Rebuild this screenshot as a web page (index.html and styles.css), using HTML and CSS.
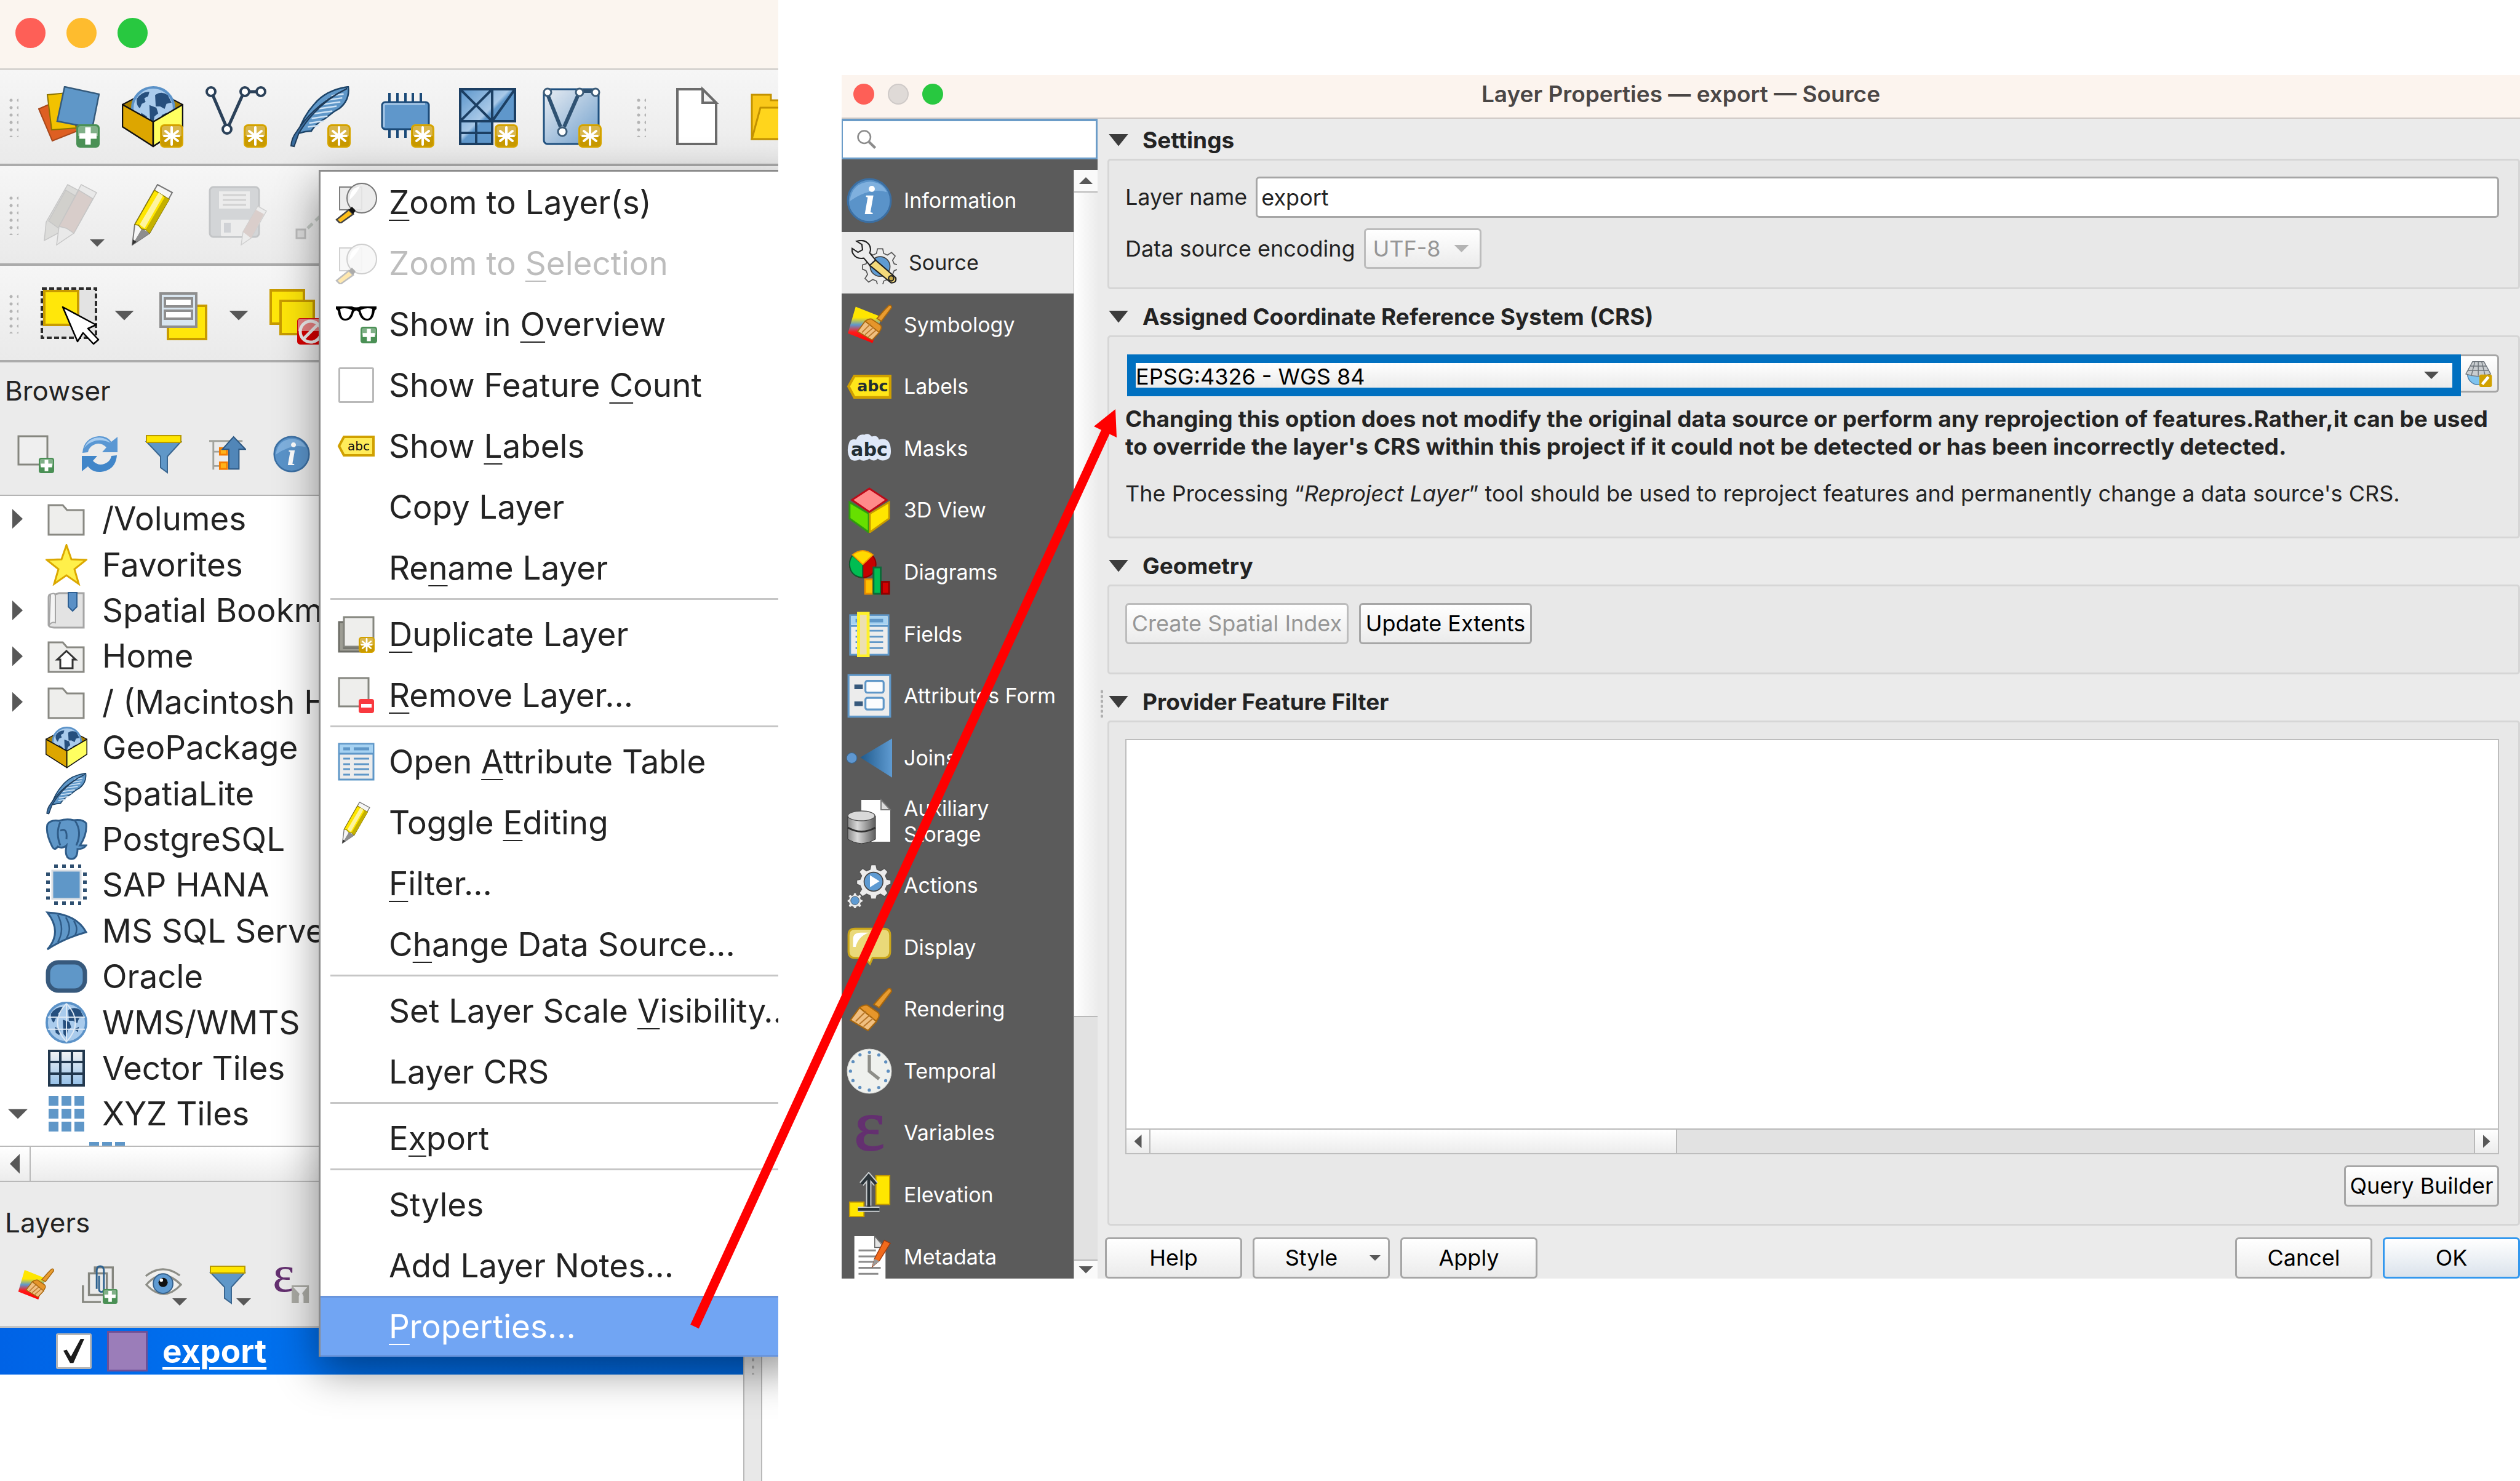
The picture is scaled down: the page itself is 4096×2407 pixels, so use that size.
FILE: index.html
```html
<!DOCTYPE html>
<html lang="en">
<head>
<meta charset="utf-8">
<title>Layer Properties</title>
<link rel="stylesheet" href="styles.css">
</head>
<body>
<svg class="paints" aria-hidden="true">
  <defs>
    <linearGradient id="gGrid" x1="0" y1="0" x2="1" y2="1"><stop offset="0" stop-color="#e9edf3"/><stop offset="1" stop-color="#6f9fcc"/></linearGradient>
    <linearGradient id="gBlue" x1="0" y1="0" x2="1" y2="1"><stop offset="0" stop-color="#5a95cb"/><stop offset=".45" stop-color="#a9c9e8"/><stop offset=".5" stop-color="#5f97cb"/><stop offset="1" stop-color="#5f97cb"/></linearGradient>
    <linearGradient id="gJoin" x1="0" y1="0" x2="1" y2="0"><stop offset="0" stop-color="#205a8c"/><stop offset="1" stop-color="#5f9bd2"/></linearGradient>
    <linearGradient id="gCyl" x1="0" y1="0" x2="1" y2="0"><stop offset="0" stop-color="#8b8b8b"/><stop offset=".35" stop-color="#d8d8d8"/><stop offset="1" stop-color="#5c5c5c"/></linearGradient>
    <linearGradient id="gVt" x1="0" y1="0" x2="0" y2="1"><stop offset="0" stop-color="#f4f4f4"/><stop offset="1" stop-color="#94c0e8"/></linearGradient>
    <linearGradient id="gSwatch" x1="0" y1="0" x2="0" y2="1"><stop offset="0" stop-color="#ffe600"/><stop offset=".3" stop-color="#ffe600"/><stop offset=".5" stop-color="#5f97cb"/><stop offset=".7" stop-color="#ff1a1a"/><stop offset="1" stop-color="#ff0000"/></linearGradient>
  </defs>
</svg>
<svg class="symbols" aria-hidden="true">
  <symbol id="b-new" viewBox="0 0 38 38"><rect x="1" y="1" width="36" height="36" rx="6" fill="#c99a00" stroke="#d9a700" stroke-width="2"/><path d="M3 7q0-4 4-4h24q4 0 4 4v12H3z" fill="#d9b64a"/><path d="M19 5v28M9 11l20 16M29 11L9 27M7 19h24" stroke="#fff" stroke-width="4" stroke-linecap="round"/></symbol>
  <symbol id="b-plus" viewBox="0 0 38 38"><rect width="38" height="38" rx="6" fill="#4a9055"/><path d="M3 7q0-4 4-4h24q4 0 4 4v12H3z" fill="#80b088"/><path d="M19 5v28M5 19h28" stroke="#fff" stroke-width="9"/></symbol>
  <symbol id="i-globe" viewBox="0 0 70 70"><circle cx="35" cy="35" r="33" fill="#a9cbec" stroke="#5b92c8" stroke-width="4"/><path d="M9 20q8-12 20-11l-2 7-6 3 2 6-6 3-3 7q-6-4-5-15zM38 14q10-7 20 0l6 12-8 2-3 8-7-4-7 0zM29 30l11 4 3 9-6 5-2 12-5-6zM16 42l9 6-2 8-6-4zM48 46l8-4-2 9z" fill="#264f7d"/></symbol>
  <symbol id="i-source-manager" viewBox="0 0 100 100"><path d="M1 37L40 20 66 72 23 89z" fill="#de5f22" stroke="#a8481c" stroke-width="2"/><path d="M15 14L46 11 62 68 22 71z" fill="#f2c200" stroke="#8d7300" stroke-width="2"/><path d="M43 1L99 13 88 68 31 57z" fill="#5f97c8" stroke="#355a7b" stroke-width="2.500"/><use href="#b-plus" x="62" y="62" width="38" height="38"/></symbol>
  <symbol id="i-gpkg" viewBox="0 0 100 100"><path d="M1 30L22 19H78L99 30 51 58z" fill="#a97f00" stroke="#111" stroke-width="2"/><use href="#i-globe" x="15" y="0" width="72" height="72"/><path d="M1 30L51 58V98L1 66z" fill="#dda600" stroke="#111" stroke-width="2.500" stroke-linejoin="round"/><path d="M51 58L99 30V66L51 98z" fill="#ffff60" stroke="#111" stroke-width="2.500" stroke-linejoin="round"/></symbol>
  <symbol id="i-gpkg-new" viewBox="0 0 100 100"><use href="#i-gpkg" width="100" height="100"/><use href="#b-new" x="62" y="62" width="38" height="38"/></symbol>
  <symbol id="i-vector-new" viewBox="0 0 100 100"><g stroke="#2b4159" stroke-width="5" fill="#fff"><path d="M12 15L33 64M60 15L38 64M71 9h12" fill="none"/><circle cx="9" cy="9" r="7" stroke-width="4"/><circle cx="64" cy="9" r="7" stroke-width="4"/><circle cx="90" cy="9" r="7" stroke-width="4"/><circle cx="35" cy="70" r="7" stroke-width="4"/></g><use href="#b-new" x="62" y="62" width="38" height="38"/></symbol>
  <symbol id="i-feather" viewBox="0 0 100 100"><path d="M96 1Q60 6 41 29 22 50 14 77L26 74 36 73Q44 60 58 53L72 42 82 36Q99 22 96 1z" fill="#5f97c8" stroke="#1d4468" stroke-width="2.500"/><path d="M27 62h18M30 56h24M35 49h26M40 42h30M48 35h30M55 29h30M63 23h26M72 17h20" stroke="#cfe3f5" stroke-width="2.500" transform="rotate(-8 60 40)"/><path d="M94 4Q45 28 16 76L8 98 3 97Q4 84 12 74 40 30 94 4z" fill="#3a6d9f" stroke="#1d3a58" stroke-width="2"/></symbol>
  <symbol id="i-feather-new" viewBox="0 0 100 100"><use href="#i-feather" width="100" height="100"/><use href="#b-new" x="62" y="62" width="38" height="38"/></symbol>
  <symbol id="i-chip-new" viewBox="0 0 100 100"><path d="M27 11v15M40 11v15M53 11v15M65 11v15M78 11v15M27 70v14M40 70v14M53 70v14" stroke="#1b4a78" stroke-width="4"/><rect x="15" y="26" width="76" height="44" rx="5" fill="#5f97cb" stroke="#1b4a78" stroke-width="3"/><path d="M18 66V32q0-3 3-3h64" fill="none" stroke="#a9c9e8" stroke-width="3"/><use href="#b-new" x="62" y="62" width="38" height="38"/></symbol>
  <symbol id="i-mesh-new" viewBox="0 0 100 100"><path d="M6 5H95V57H58V94H6z" fill="url(#gBlue)"/><path d="M6 5H95V57H58V94H6zM6 57H58V5M6 5L58 57M58 5L6 57M95 5L58 57M32 57V94M6 76H58" fill="none" stroke="#1c3f63" stroke-width="4"/><use href="#b-new" x="62" y="62" width="38" height="38"/></symbol>
  <symbol id="i-vgrid-new" viewBox="0 0 100 100"><rect x="6" y="5" width="89" height="89" rx="6" fill="url(#gGrid)" stroke="#1f507f" stroke-width="3"/><path d="M13 16L33 66M61 16L39 66M70 8h14" stroke="#2f5273" stroke-width="6"/><g fill="#fff" stroke="#3c5c79" stroke-width="3"><circle cx="12" cy="10" r="6"/><circle cx="64" cy="10" r="6"/><circle cx="90" cy="10" r="6"/><circle cx="36" cy="74" r="7"/></g><use href="#b-new" x="62" y="62" width="38" height="38"/></symbol>
  <symbol id="i-file" viewBox="0 0 100 100"><path d="M19 5H60L82 27V94H19z" fill="#fff" stroke="#6b6b6b" stroke-width="4"/><path d="M60 5V27H82z" fill="#f2f2f2" stroke="#6b6b6b" stroke-width="4"/></symbol>
  <symbol id="i-folder-yellow" viewBox="0 0 100 100"><path d="M4 86V14H35V23H98V86z" fill="#fac81a" stroke="#c39200" stroke-width="3"/><path d="M4 86L18 35H100V86z" fill="#ffd51c" stroke="#c39200" stroke-width="3"/></symbol>
  <symbol id="i-pencil" viewBox="0 0 100 100"><path d="M17 99L21 66 58 1 82 14 45 80z" fill="#f6f6f6" stroke="#777" stroke-width="2"/><path d="M17 99L33 72 45 80z" fill="#8d8d8d"/><path d="M17 99L18 90 24 94z" fill="#333"/><path d="M21 66L53 10 77 25 45 80 39 74 32 73 27 67z" fill="#ffe600" stroke="#8a7a00" stroke-width="1.500"/><path d="M29 66L60 14 67 19 37 72z" fill="#fdf4a0"/><path d="M39 74L70 21 77 25 45 80z" fill="#c4b000"/></symbol>
  <symbol id="i-pencils-grey" viewBox="0 0 100 100"><g stroke="#c6c6c6" stroke-width="1.500"><path d="M10 92L13 62 48 1 72 14 36 78z" fill="#dcdcda"/><path d="M17 60L45 10 65 22 36 74z" fill="#d1d0cc"/><path d="M30 99L34 69 70 1 95 14 58 80z" fill="#e9e9e9"/><path d="M34 69L66 10 89 24 58 80 46 72z" fill="#d8cdca"/></g></symbol>
  <symbol id="i-save-grey" viewBox="0 0 100 100"><rect x="7" y="5" width="80" height="81" rx="6" fill="#d3d5d7" stroke="#c3c5c7" stroke-width="3"/><rect x="22" y="12" width="50" height="28" fill="#ececec"/><path d="M28 18h38M28 26h38M28 34h38" stroke="#d2d2d2" stroke-width="3"/><rect x="25" y="58" width="46" height="27" rx="2" fill="#ececec"/><rect x="30" y="63" width="11" height="16" fill="#d0d2d6"/><path d="M58 99L61 78 85 36 99 44 74 88z" fill="#ececec" stroke="#cfcfcf" stroke-width="1.500"/><path d="M61 78L82 42 95 49 74 88z" fill="#dacecb"/></symbol>
  <symbol id="i-nodes-grey" viewBox="0 0 100 100"><path d="M30 72L90 14" stroke="#c4cac5" stroke-width="5" stroke-dasharray="11 7"/><rect x="12" y="74" width="14" height="14" fill="#ddd" stroke="#bdbdbd" stroke-width="3"/></symbol>
  <symbol id="i-select" viewBox="0 0 100 100"><rect x="6" y="4" width="88" height="80" fill="#e3e3e3" stroke="#2c2c2c" stroke-width="4" stroke-dasharray="8 4"/><rect x="10" y="8" width="55" height="55" fill="#ffe70a" stroke="#c89b00" stroke-width="4"/><path d="M40 34L94 63 81 69 98 87 90 94 73 76 64 90z" fill="#fff" stroke="#000" stroke-width="2.500" stroke-linejoin="round"/></symbol>
  <symbol id="i-select-form" viewBox="0 0 100 100"><rect x="25" y="32" width="62" height="54" fill="#ffe70a" stroke="#c89b00" stroke-width="4"/><rect x="13" y="12" width="58" height="54" fill="#d8e5ef" stroke="#8e8e8e" stroke-width="4"/><rect x="20" y="20" width="44" height="13" fill="#fff" stroke="#8e8e8e" stroke-width="4"/><rect x="20" y="40" width="44" height="13" fill="#fff" stroke="#8e8e8e" stroke-width="4"/></symbol>
  <symbol id="i-deselect" viewBox="0 0 100 100"><rect x="6" y="7" width="54" height="54" fill="#ffe70a" stroke="#c89b00" stroke-width="4"/><rect x="22" y="24" width="54" height="54" fill="#ffe70a" stroke="#c89b00" stroke-width="4"/><rect x="49" y="52" width="44" height="43" rx="5" fill="#d80000"/><path d="M50 58q0-5 5-5h34q4 0 4 5v15H50z" fill="#e88080"/><circle cx="71" cy="74" r="17" fill="none" stroke="#eee" stroke-width="5"/><path d="M59 86L83 62" stroke="#eee" stroke-width="5"/></symbol>
  <symbol id="i-add-layer" viewBox="0 0 60 62"><rect x="2" y="2" width="47" height="46" fill="#efefef" stroke="#85867f" stroke-width="3"/><use href="#b-plus" x="35" y="37" width="25" height="25"/></symbol>
  <symbol id="i-refresh" viewBox="0 0 60 60"><path d="M2 28Q4 4 28 1 42 0 49 10L59 2V27H34L41 19Q30 8 17 17 12 21 11 27z" fill="#5a97d3"/><path d="M58 32Q56 56 32 59 18 60 11 50L1 58V33H26L19 41Q30 52 43 43 48 39 49 33z" fill="#4186c9"/><path d="M5 20Q12 3 30 3 42 4 48 12 36 6 24 8 12 11 5 20z" fill="#a8cdf0"/></symbol>
  <symbol id="i-funnel" viewBox="0 0 60 64"><path d="M2 12H58L36 36V62L25 54V36z" fill="#5f97c8" stroke="#3a6690" stroke-width="2"/><rect x="2" y="2" width="56" height="11" fill="#ffe600" stroke="#b89a00" stroke-width="2"/></symbol>
  <symbol id="i-collapse" viewBox="0 0 62 60"><path d="M0 8H56M7 8V56M7 26H18M7 50H18" stroke="#a2a39d" stroke-width="3" fill="none"/><rect x="18" y="20" width="12" height="11" fill="#ffb21a" stroke="#f57c00" stroke-width="3"/><rect x="18" y="44" width="12" height="11" fill="#ffb21a" stroke="#f57c00" stroke-width="3"/><path d="M41 1L61 22H50V55H33V22H22z" fill="#5186b8" stroke="#2b5681" stroke-width="2"/></symbol>
  <symbol id="i-info" viewBox="0 0 70 70"><circle cx="35" cy="35" r="33" fill="#5a93c9" stroke="#3b6fa3" stroke-width="3"/><path d="M5 36Q8 8 36 6 55 7 62 22 36 14 5 36z" fill="#7fb0de"/><text x="35" y="56" text-anchor="middle" font-family="Liberation Serif, serif" font-style="italic" font-weight="700" font-size="62" fill="#fff">i</text></symbol>
  <symbol id="i-folder" viewBox="0 0 68 68"><path d="M5 12H28L35 20H62V60H5z" fill="#eeeeec" stroke="#898983" stroke-width="3"/></symbol>
  <symbol id="i-home" viewBox="0 0 68 68"><use href="#i-folder" width="68" height="68"/><path d="M34 26L49 40H44V54H24V40H19z" fill="#fff" stroke="#333" stroke-width="3"/></symbol>
  <symbol id="i-star" viewBox="0 0 68 68"><path d="M34 2L42 25 66 26 47 41 54 65 34 51 14 65 21 41 2 26 26 25z" fill="#fff04a" stroke="#dba800" stroke-width="3"/></symbol>
  <symbol id="i-book" viewBox="0 0 68 68"><path d="M8 8Q5 8 5 14V58Q6 62 14 62H62V6H22L16 8z" fill="#e3e3e3" stroke="#a5a5a5" stroke-width="3"/><path d="M8 8Q15 4 16 10V54Q10 52 6 58z" fill="#f4f4f4" stroke="#a5a5a5" stroke-width="2"/><path d="M37 5H51V28L44 35 37 28z" fill="#5a90c6" stroke="#2e5f92" stroke-width="2"/></symbol>
  <symbol id="i-postgres" viewBox="0 0 68 68"><path d="M3 10Q8 2 22 4 34 0 46 3 60 1 66 8 68 26 56 44L66 44Q62 50 52 50 52 66 42 66 33 66 33 52L34 44Q28 50 20 46 14 54 10 44 0 24 3 10z" fill="#5f97c8" stroke="#2f5c88" stroke-width="3"/><path d="M24 6Q16 24 24 44M48 4Q60 22 50 44M24 20Q36 14 34 34" fill="none" stroke="#2f5c88" stroke-width="3"/></symbol>
  <symbol id="i-hana" viewBox="0 0 68 68"><rect x="11" y="11" width="46" height="46" fill="#5f97c8" stroke="#d8dde3" stroke-width="3"/><path d="M14 4H58M14 64H58M4 14V58M64 14V58" stroke="#2e4f70" stroke-width="6" stroke-dasharray="6 7"/></symbol>
  <symbol id="i-mssql" viewBox="0 0 68 68"><path d="M3 4Q50 6 66 36 30 46 3 64 28 36 3 4z" fill="#5f97c8" stroke="#2e5a86" stroke-width="3"/><path d="M20 8Q32 32 20 52M33 12Q44 30 34 46M46 18Q54 30 48 41" fill="none" stroke="#2e5a86" stroke-width="2.500"/></symbol>
  <symbol id="i-oracle" viewBox="0 0 68 68"><rect x="4" y="11" width="60" height="46" rx="17" fill="#5f97c8" stroke="#37597c" stroke-width="7"/></symbol>
  <symbol id="i-wms" viewBox="0 0 70 70"><use href="#i-globe" width="70" height="70"/><path d="M4 26H66M4 46H66M35 3V67M35 3Q5 35 35 67Q65 35 35 3" fill="none" stroke="#dfeaf5" stroke-width="2"/></symbol>
  <symbol id="i-vtiles" viewBox="0 0 68 68"><rect x="6" y="6" width="56" height="56" fill="url(#gVt)"/><path d="M6 6H62V62H6zM24 6V62M43 6V62M6 24H62M6 43H62" fill="none" stroke="#22384e" stroke-width="4"/></symbol>
  <symbol id="i-xyz" viewBox="0 0 68 68"><path d="M5 5h16v16H5zM26 5h16v16H26zM47 5h16v16H47zM5 26h16v16H5zM26 26h16v16H26zM47 26h16v16H47zM5 47h16v16H5zM26 47h16v16H26zM47 47h16v16H47z" fill="#5f97c8"/></symbol>
  <symbol id="i-brush" viewBox="0 0 70 70"><path d="M56 12L64 4Q69 2 69 8L50 33 42 28z" fill="#e89c30" stroke="#a8660c" stroke-width="2"/><path d="M20 33Q26 28 32 29L48 40Q52 44 48 50L44 56z" fill="#e6962b" stroke="#a8660c" stroke-width="2"/><path d="M20 33L46 54 33 68 6 52z" fill="#f0bf80" stroke="#a8660c" stroke-width="2"/><path d="M14 54L30 38M20 58L36 44M26 62L41 49" stroke="#b9772a" stroke-width="2"/></symbol>
  <symbol id="i-style" viewBox="0 0 70 70"><path d="M14 7L54 23 40 63 2 48z" fill="url(#gSwatch)"/><use href="#i-brush" x="12" y="2" width="58" height="58"/></symbol>
  <symbol id="i-add-group" viewBox="0 0 60 66"><path d="M22 12V4h30v36M12 22v-8h30v36H12zM2 34v28h30" fill="none" stroke="#85867f" stroke-width="3.500"/><path d="M25 40V10q0-8 6-8t6 8v30q0 5-4 5t-4-5V18" fill="none" stroke="#2d618f" stroke-width="3"/><use href="#b-plus" x="35" y="40" width="25" height="25"/></symbol>
  <symbol id="i-eye" viewBox="0 0 64 60"><path d="M1 15Q30-8 60 14M2 30Q30-2 62 30Q32 62 2 30z" fill="#f1f1ef" stroke="#8d8e87" stroke-width="3.500"/><circle cx="31" cy="28" r="17" fill="#5f9bd2" stroke="#35618c" stroke-width="2"/><circle cx="31" cy="26" r="8" fill="#111"/><circle cx="28" cy="22" r="3" fill="#fff"/></symbol>
  <symbol id="i-eps-filter" viewBox="0 0 60 66"><text x="-2" y="44" font-family="Liberation Serif, serif" font-size="88" fill="#643070">ε</text><path d="M30 34H59V64H50V52L46 44 42 52V64H30z" fill="#a9a9a3"/><path d="M33 37H56L47 48V62H43V48z" fill="#eee"/></symbol>
  <symbol id="i-zoom" viewBox="0 0 68 68"><rect x="7" y="9" width="36" height="37" fill="#ececec" stroke="#7d7d7d" stroke-width="2"/><path d="M22 46L29 53 8 68 2 62z" fill="#ffbf1a" stroke="#444" stroke-width="2.500"/><circle cx="43" cy="27" r="24" fill="#eaeaea" fill-opacity=".92" stroke="#777" stroke-width="2"/><path d="M23 30Q24 10 40 8 34 20 23 30z" fill="#fff"/><path d="M22 46l5-5 6 6-4 6z" fill="#111"/></symbol>
  <symbol id="i-glasses" viewBox="0 0 68 68"><path d="M1 5H27Q34 8 41 5H67V9L64 12Q62 28 52 28 41 28 38 14 34 9 30 14 27 28 16 28 6 28 4 12L1 9z"/><path d="M8 9Q18 6 27 11 24 25 16 25 9 25 8 9zM60 9Q50 6 41 11 44 25 52 25 59 25 60 9z" fill="#fff"/><use href="#b-plus" x="41" y="38" width="27" height="27"/></symbol>
  <symbol id="i-label" viewBox="0 0 68 68"><path d="M6 34L14 19H62V49H14z" fill="#ffec5a" stroke="#d0a000" stroke-width="4"/><text x="38" y="41" text-anchor="middle" font-family="DejaVu Sans, sans-serif" font-size="20" fill="#111">abc</text></symbol>
  <symbol id="i-duplicate" viewBox="0 0 68 68"><path d="M6 14H14V56H44V62H6z" fill="#9d9d94" stroke="#6c6d66" stroke-width="3"/><rect x="14" y="6" width="48" height="48" fill="#eeeeec" stroke="#85867f" stroke-width="3"/><use href="#b-new" x="38" y="38" width="26" height="26"/></symbol>
  <symbol id="i-remove" viewBox="0 0 68 68"><rect x="6" y="6" width="48" height="46" fill="#eeeeec" stroke="#85867f" stroke-width="3"/><rect x="38" y="40" width="25" height="23" rx="4" fill="#f9393f"/><path d="M42 51h17" stroke="#fff" stroke-width="6"/></symbol>
  <symbol id="i-table" viewBox="0 0 68 68"><rect x="6" y="5" width="56" height="58" fill="#ececec" stroke="#5f97c8" stroke-width="3"/><rect x="7" y="6" width="54" height="14" fill="#a6d2f2"/><path d="M13 13H24M30 13H55" stroke="#5f97c8" stroke-width="5"/><path d="M6 21H62M13 29H24M30 29H55M13 38H24M30 38H55M13 46H24M30 46H55M13 55H24M30 55H55" stroke="#5f97c8" stroke-width="3"/></symbol>
  <symbol id="i-search" viewBox="0 0 40 40"><circle cx="15" cy="15" r="12" fill="none" stroke="#8c8c8c" stroke-width="3"/><path d="M24 24L36 36" stroke="#8c8c8c" stroke-width="5"/></symbol>
  <symbol id="i-gear" viewBox="0 0 70 70"><path d="M30 2h10l2 9 7 3 8-5 7 7-5 8 3 7 8 2v8l-8 3-3 7 5 8-7 7-8-5-7 3-2 7H30l-2-7-7-3-8 5-7-7 5-8-3-7-7-3v-8l7-2 3-7-5-8 7-7 8 5 7-3z" fill="#ececec" stroke="#555" stroke-width="2"/><circle cx="35" cy="36" r="19" fill="#5f9bd2" stroke="#444" stroke-width="2"/></symbol>
  <symbol id="i-source" viewBox="0 0 70 70"><use href="#i-gear" x="16" y="12" width="56" height="56"/><path d="M8 2Q20-2 27 7 31 13 28 20L38 32 29 40 19 28Q8 30 3 22 0 18 1 13L10 19 17 15 16 7z" fill="#ececec" stroke="#222" stroke-width="2"/><path d="M28 39L37 31 68 58Q70 66 61 66z" fill="#f3d97a" stroke="#222" stroke-width="2"/><circle cx="61" cy="59" r="4" fill="#c9a842" stroke="#222" stroke-width="2"/></symbol>
  <symbol id="i-labels" viewBox="0 0 70 70"><path d="M3 35L12 19H67V52H12z" fill="#ffe61a" stroke="#d0a000" stroke-width="4"/><text x="40" y="43" text-anchor="middle" font-family="DejaVu Sans, sans-serif" font-weight="700" font-size="24" fill="#222d33">abc</text></symbol>
  <symbol id="i-masks" viewBox="0 0 76 70"><path d="M6 52Q-1 40 4 26 6 18 16 20 20 10 30 12 36 8 42 15 52 12 54 20 70 16 73 30 76 46 70 52 60 58 52 52 46 58 38 52 28 58 22 53 12 58 6 52z" fill="#dfe8f8"/><text x="38" y="47" text-anchor="middle" font-family="DejaVu Sans, sans-serif" font-weight="700" font-size="31" fill="#222d33">abc</text></symbol>
  <symbol id="i-3d" viewBox="0 0 70 76"><path d="M2 25L34 44V75L2 52z" fill="#66e000" stroke="#2f9a10" stroke-width="3"/><path d="M68 25L36 44V75L68 52z" fill="#ffe600" stroke="#c79a00" stroke-width="3"/><path d="M35 2L64 21 35 41 6 21z" fill="#ff8b8b" stroke="#bd0a18" stroke-width="3"/></symbol>
  <symbol id="i-diagrams" viewBox="0 0 70 76"><circle cx="24" cy="25" r="22" fill="#c70000" stroke="#8e0000" stroke-width="2"/><path d="M24 25L7 10Q2 16 2 25 3 45 24 47z" fill="#00bd52" stroke="#0a5c30" stroke-width="2"/><path d="M24 25L7 9Q24-5 41 9z" fill="#ffd900" stroke="#f19b00" stroke-width="2"/><rect x="28" y="50" width="13" height="24" fill="#ffbf00" stroke="#e88c00" stroke-width="3"/><rect x="42" y="30" width="12" height="44" fill="#00bd52" stroke="#0a6b38" stroke-width="3"/><rect x="56" y="54" width="12" height="20" fill="#d30000" stroke="#8e0000" stroke-width="3"/></symbol>
  <symbol id="i-fields" viewBox="0 0 70 76"><rect x="3" y="6" width="64" height="66" fill="#ececec" stroke="#5f97c8" stroke-width="3"/><rect x="5" y="8" width="60" height="14" fill="#a6d2f2"/><path d="M12 15H58" stroke="#5f97c8" stroke-width="6"/><path d="M3 24H67M12 32H58M12 42H58M12 51H58M12 61H58" stroke="#5f97c8" stroke-width="3"/><rect x="17" y="3" width="16" height="71" fill="#ede0b0" stroke="#fff12a" stroke-width="5"/></symbol>
  <symbol id="i-form" viewBox="0 0 70 70"><rect x="3" y="3" width="64" height="64" fill="#ececec" stroke="#5f97c8" stroke-width="3"/><path d="M12 21H25M12 47H25" stroke="#37597c" stroke-width="7"/><rect x="29" y="12" width="28" height="18" rx="3" fill="#fbfcfd" stroke="#5f97c8" stroke-width="3"/><rect x="29" y="38" width="28" height="18" rx="3" fill="#fbfcfd" stroke="#5f97c8" stroke-width="3"/></symbol>
  <symbol id="i-joins" viewBox="0 0 70 70"><path d="M21 34L70 5V65z" fill="url(#gJoin)"/><circle cx="8" cy="35" r="8" fill="#5f97d0" stroke="#36648f" stroke-width="1"/></symbol>
  <symbol id="i-aux" viewBox="0 0 70 74"><path d="M22 2H54L69 18V70H22z" fill="#fff"/><path d="M54 2V18H69z" fill="#dcdcdc" stroke="#777" stroke-width="2"/><path d="M0 28V66Q22 80 45 66V28z" fill="url(#gCyl)" stroke="#333" stroke-width="1"/><ellipse cx="22" cy="28" rx="22" ry="8" fill="#d9d9d9" stroke="#555" stroke-width="1.500"/><path d="M0 47Q22 60 45 47" fill="none" stroke="#333" stroke-width="3"/></symbol>
  <symbol id="i-actions" viewBox="0 0 74 76"><use href="#i-gear" x="15" y="2" width="58" height="58"/><path d="M38 21L54 31 38 41z" fill="#fff"/><use href="#i-gear" x="0" y="50" width="26" height="26"/></symbol>
  <symbol id="i-display" viewBox="0 0 70 70"><path d="M13 6H57Q67 6 67 16V41Q67 51 57 51H40L36 60 28 51H13Q3 51 3 41V16Q3 6 13 6z" fill="#ead979" stroke="#c9a51a" stroke-width="3"/><path d="M10 34V22Q10 12 22 12H34Q18 18 14 34z" fill="#fff"/></symbol>
  <symbol id="i-temporal" viewBox="0 0 70 70"><circle cx="35" cy="35" r="34" fill="#eff1ee" stroke="#d6d8d6" stroke-width="1"/><circle cx="35" cy="35" r="29" fill="none" stroke="#5f8fbf" stroke-width="5" stroke-dasharray="0 15.180" stroke-linecap="round"/><path d="M35 10V35L50 47" fill="none" stroke="#8d8e89" stroke-width="5"/></symbol>
  <symbol id="i-variables" viewBox="0 0 70 70"><text x="35" y="61" text-anchor="middle" font-family="Liberation Serif, serif" font-size="112" fill="#643070" stroke="#643070" stroke-width="2">ε</text></symbol>
  <symbol id="i-elevation" viewBox="0 0 70 76"><rect x="46" y="6" width="23" height="48" fill="#ffe600" stroke="#c39a00" stroke-width="2"/><rect x="2" y="50" width="24" height="24" fill="#ffe600" stroke="#c39a00" stroke-width="2"/><path d="M34 56V8M22 20L34 6 46 20M16 62H52" fill="none" stroke="#c7ccce" stroke-width="9"/><path d="M34 58V8M22 20L34 6 46 20M16 62H52" fill="none" stroke="#2a3338" stroke-width="5"/></symbol>
  <symbol id="i-metadata" viewBox="0 0 70 76"><path d="M10 3H44L62 22V74H10z" fill="#fff"/><path d="M44 3V22H60z" fill="#e3e3e3" stroke="#666" stroke-width="1.500"/><path d="M17 27H46M17 37H46M17 46H44M17 56H54M17 66H50" stroke="#8b8b8b" stroke-width="3"/><path d="M40 54L44 40 60 10 70 15 52 44z" fill="#f26a1c" stroke="#a23b0c" stroke-width="1.500"/><path d="M40 54L43 41 52 45z" fill="#999"/></symbol>
  <symbol id="i-crs" viewBox="0 0 48 50"><circle cx="22" cy="26" r="19" fill="#7fc3ef" stroke="#4e7fa8" stroke-width="1.500"/><path d="M12 4H32L44 26Q22 34 0 26z" fill="#c9cdd0" stroke="#6d747a" stroke-width="1.500"/><path d="M22 4V29M16 4L10 28M28 4L34 28M8 12H36M4 20H40" stroke="#6d747a" stroke-width="1.500"/><rect x="24" y="27" width="22" height="22" rx="3" fill="#d1a100"/><path d="M29 44L40 31" stroke="#fff" stroke-width="5"/></symbol>
</svg>

<main class="page">
  <section class="app" aria-label="Map window">
    <header class="app-title">
      <i class="light red"></i><i class="light amber"></i><i class="light green"></i>
    </header>

    <div class="toolbar toolbar-a">
      <i class="grip"></i>
      <div class="tools">
        <svg><use href="#i-source-manager"/></svg>
        <svg><use href="#i-gpkg-new"/></svg>
        <svg><use href="#i-vector-new"/></svg>
        <svg><use href="#i-feather-new"/></svg>
        <svg><use href="#i-chip-new"/></svg>
        <svg><use href="#i-mesh-new"/></svg>
        <svg><use href="#i-vgrid-new"/></svg>
      </div>
      <i class="grip grip-mid"></i>
      <div class="tools">
        <svg><use href="#i-file"/></svg>
        <svg><use href="#i-folder-yellow"/></svg>
      </div>
    </div>

    <div class="toolbar toolbar-b">
      <i class="grip"></i>
      <div class="tools">
        <span class="has-menu"><svg><use href="#i-pencils-grey"/></svg><i class="tri-down small"></i></span>
        <svg><use href="#i-pencil"/></svg>
        <svg><use href="#i-save-grey"/></svg>
        <svg><use href="#i-nodes-grey"/></svg>
      </div>
    </div>

    <div class="toolbar toolbar-c">
      <i class="grip"></i>
      <svg><use href="#i-select"/></svg>
      <i class="tri-down split"></i>
      <svg><use href="#i-select-form"/></svg>
      <i class="tri-down split"></i>
      <svg><use href="#i-deselect"/></svg>
    </div>

    <h2 class="panel-title">Browser</h2>
    <div class="panel-tools">
      <svg><use href="#i-add-layer"/></svg>
      <svg><use href="#i-refresh"/></svg>
      <svg><use href="#i-funnel"/></svg>
      <svg><use href="#i-collapse"/></svg>
      <svg><use href="#i-info"/></svg>
    </div>
    <div class="tree">
      <ul>
        <li><i class="tri-right"></i><svg><use href="#i-folder"/></svg>/Volumes</li>
        <li><i></i><svg><use href="#i-star"/></svg>Favorites</li>
        <li><i class="tri-right"></i><svg><use href="#i-book"/></svg>Spatial Bookmarks</li>
        <li><i class="tri-right"></i><svg><use href="#i-home"/></svg>Home</li>
        <li><i class="tri-right"></i><svg><use href="#i-folder"/></svg>/ (Macintosh HD)</li>
        <li><i></i><svg><use href="#i-gpkg"/></svg>GeoPackage</li>
        <li><i></i><svg><use href="#i-feather"/></svg>SpatiaLite</li>
        <li><i></i><svg><use href="#i-postgres"/></svg>PostgreSQL</li>
        <li><i></i><svg><use href="#i-hana"/></svg>SAP HANA</li>
        <li><i></i><svg><use href="#i-mssql"/></svg>MS SQL Server</li>
        <li><i></i><svg><use href="#i-oracle"/></svg>Oracle</li>
        <li><i></i><svg><use href="#i-wms"/></svg>WMS/WMTS</li>
        <li><i></i><svg><use href="#i-vtiles"/></svg>Vector Tiles</li>
        <li><i class="tri-open"></i><svg><use href="#i-xyz"/></svg>XYZ Tiles</li>
        <li class="child"><i></i><svg><use href="#i-xyz"/></svg></li>
      </ul>
    </div>
    <div class="hscroll hscroll-browser"><button type="button" aria-label="Scroll left"><i class="tri-left"></i></button><i class="thumb"></i></div>

    <h2 class="panel-title panel-title-layers">Layers</h2>
    <div class="panel-tools panel-tools-layers">
      <svg><use href="#i-style"/></svg>
      <svg><use href="#i-add-group"/></svg>
      <span class="has-menu"><svg><use href="#i-eye"/></svg><i class="tri-down small"></i></span>
      <span class="has-menu"><svg><use href="#i-funnel"/></svg><i class="tri-down small"></i></span>
      <svg><use href="#i-eps-filter"/></svg>
    </div>
    <div class="layers">
      <div class="layer-list">
        <label class="layer"><input class="tick" type="checkbox" checked><i class="swatch"></i><span>export</span></label>
      </div>
      <div class="splitter"><i></i></div>
    </div>

    <div class="menu" role="menu">
      <button type="button" role="menuitem"><svg><use href="#i-zoom"/></svg><span><u>Z</u>oom to Layer(s)</span></button>
      <button type="button" role="menuitem" disabled><svg><use href="#i-zoom"/></svg><span>Zoom to <u>S</u>election</span></button>
      <button type="button" role="menuitem"><svg><use href="#i-glasses"/></svg><span>Show in <u>O</u>verview</span></button>
      <label class="menu-check"><input type="checkbox"><span>Show Feature <u>C</u>ount</span></label>
      <button type="button" role="menuitem"><svg><use href="#i-label"/></svg><span>Show <u>L</u>abels</span></button>
      <button type="button" role="menuitem"><span>Copy Layer</span></button>
      <button type="button" role="menuitem"><span>Re<u>n</u>ame Layer</span></button>
      <hr>
      <button type="button" role="menuitem"><svg><use href="#i-duplicate"/></svg><span><u>D</u>uplicate Layer</span></button>
      <button type="button" role="menuitem"><svg><use href="#i-remove"/></svg><span><u>R</u>emove Layer…</span></button>
      <hr>
      <button type="button" role="menuitem"><svg><use href="#i-table"/></svg><span>Open <u>A</u>ttribute Table</span></button>
      <button type="button" role="menuitem"><svg><use href="#i-pencil"/></svg><span>Toggle <u>E</u>diting</span></button>
      <button type="button" role="menuitem"><span><u>F</u>ilter…</span></button>
      <button type="button" role="menuitem"><span>C<u>h</u>ange Data Source…</span></button>
      <hr>
      <button type="button" role="menuitem"><span>Set Layer Scale <u>V</u>isibility…</span></button>
      <button type="button" role="menuitem"><span>Layer CRS</span></button>
      <hr>
      <button type="button" role="menuitem"><span>E<u>x</u>port</span></button>
      <hr>
      <button type="button" role="menuitem"><span>Styles</span></button>
      <button type="button" role="menuitem"><span>Add Layer Notes…</span></button>
      <button type="button" role="menuitem" class="current"><span><u>P</u>roperties…</span></button>
    </div>
  </section>

  <section class="dialog" aria-label="Layer Properties">
    <header class="dialog-title">
      <i class="light red"></i><i class="light idle"></i><i class="light green"></i>
      <h1>Layer Properties — export — Source</h1>
    </header>
    <div class="dialog-body">
      <aside>
        <div class="search"><svg><use href="#i-search"/></svg><input type="search" aria-label="Search"></div>
        <div class="side">
          <nav>
            <button type="button"><svg><use href="#i-info"/></svg>Information</button>
            <button type="button" class="on"><svg><use href="#i-source"/></svg>Source</button>
            <button type="button"><svg><use href="#i-style"/></svg>Symbology</button>
            <button type="button"><svg><use href="#i-labels"/></svg>Labels</button>
            <button type="button"><svg><use href="#i-masks"/></svg>Masks</button>
            <button type="button"><svg><use href="#i-3d"/></svg>3D View</button>
            <button type="button"><svg><use href="#i-diagrams"/></svg>Diagrams</button>
            <button type="button"><svg><use href="#i-fields"/></svg>Fields</button>
            <button type="button"><svg><use href="#i-form"/></svg>Attributes Form</button>
            <button type="button"><svg><use href="#i-joins"/></svg>Joins</button>
            <button type="button" class="two-line"><svg><use href="#i-aux"/></svg>Auxiliary<br>Storage</button>
            <button type="button"><svg><use href="#i-actions"/></svg>Actions</button>
            <button type="button"><svg><use href="#i-display"/></svg>Display</button>
            <button type="button"><svg><use href="#i-brush"/></svg>Rendering</button>
            <button type="button"><svg><use href="#i-temporal"/></svg>Temporal</button>
            <button type="button"><svg><use href="#i-variables"/></svg>Variables</button>
            <button type="button"><svg><use href="#i-elevation"/></svg>Elevation</button>
            <button type="button"><svg><use href="#i-metadata"/></svg>Metadata</button>
          </nav>
          <div class="vscroll">
            <button type="button" aria-label="Scroll up"><i class="tri-up"></i></button>
            <i class="thumb"></i><i class="track"></i>
            <button type="button" aria-label="Scroll down"><i class="tri-down small"></i></button>
          </div>
        </div>
      </aside>

      <form class="pane">
        <h2 class="first"><i class="tri-head"></i>Settings</h2>
        <div class="group">
          <div class="row"><label for="name">Layer name</label><input id="name" class="field" type="text" value="export"></div>
          <div class="row row-next"><label for="enc">Data source encoding</label><span class="select enc"><select id="enc" disabled><option>UTF-8</option></select></span></div>
        </div>

        <h2><i class="tri-head"></i>Assigned Coordinate Reference System (CRS)</h2>
        <div class="group group-crs">
          <div class="crs-row">
            <span class="select crs"><select aria-label="Coordinate reference system"><option>EPSG:4326 - WGS 84</option></select></span>
            <button type="button" class="crs-pick" aria-label="Select CRS"><svg><use href="#i-crs"/></svg></button>
          </div>
          <p class="warn">Changing this option does not modify the original data source or perform any reprojection of features.Rather,it can be used<br>to override the layer's CRS within this project if it could not be detected or has been incorrectly detected.</p>
          <p class="note">The Processing “<em>Reproject Layer</em>” tool should be used to reproject features and permanently change a data source's CRS.</p>
        </div>

        <h2><i class="tri-head"></i>Geometry</h2>
        <div class="group group-geom">
          <button type="button" class="btn w-index" disabled>Create Spatial Index</button>
          <button type="button" class="btn w-extent">Update Extents</button>
        </div>

        <h2 class="dotted"><i class="tri-head"></i>Provider Feature Filter</h2>
        <div class="group group-filter">
          <div class="query">
            <textarea aria-label="Provider feature filter" readonly></textarea>
            <div class="hscroll">
              <button type="button" aria-label="Scroll left"><i class="tri-left"></i></button>
              <i class="thumb"></i><i class="track"></i>
              <button type="button" aria-label="Scroll right"><i class="tri-right"></i></button>
            </div>
          </div>
          <button type="button" class="btn w-query">Query Builder</button>
        </div>

        <footer>
          <button type="button" class="btn">Help</button>
          <button type="button" class="btn btn-style">Style<i class="tri-down"></i></button>
          <button type="button" class="btn">Apply</button>
          <button type="button" class="btn push">Cancel</button>
          <button type="button" class="btn ok">OK</button>
        </footer>
      </form>
    </div>
  </section>

  <svg class="pointer" viewBox="0 0 4096 2407" aria-hidden="true"><path d="M1129 2156L1800 695" stroke="#f00" stroke-width="15"/><path d="M1813 665L1778 693 1815 711z" fill="#f00"/></svg>
</main>
</body>
</html>
```
FILE: styles.css
```css
* { box-sizing: border-box; }
body {
  margin: 0;
  background: #fff;
  color: #232323;
  font-family: Inter, "Liberation Sans", sans-serif;
}
button, input, select, textarea { font: inherit; color: inherit; margin: 0; }
button { background: none; border: 0; padding: 0; }
h1, h2, p, ul { margin: 0; padding: 0; font-weight: inherit; font-size: inherit; }
ul { list-style: none; }
i { display: block; flex: none; }
em { font-style: italic; }
svg { display: block; flex: none; }
.paints { position: absolute; width: 0; height: 0; }
.symbols { display: none; }

.page {
  position: relative;
  display: grid;
  grid-template-columns: minmax(0, 1265fr) minmax(0, 2728fr);
  column-gap: 103px;
  align-items: start;
  min-height: 100vh;
}
.pointer { position: absolute; inset: 0; width: 100%; pointer-events: none; }

/* shared bits */
.light { width: 34px; height: 34px; border-radius: 50%; }
.red { background: #fe5f57; }
.amber { background: #febc2e; }
.green { background: #28c840; }
.idle { background: #dfdad7; border: 2px solid #cfcac8; }

.tri-down { width: 32px; height: 16px; background: #585858; clip-path: polygon(0 0, 100% 0, 50% 100%); }
.tri-down.small { width: 24px; height: 12px; }
.tri-right { width: 17px; height: 32px; background: #585858; clip-path: polygon(0 0, 100% 50%, 0 100%); }
.tri-left { width: 16px; height: 32px; background: #585858; clip-path: polygon(100% 0, 0 50%, 100% 100%); }
.tri-up { width: 22px; height: 11px; background: #585858; clip-path: polygon(50% 0, 100% 100%, 0 100%); }
.tri-head { width: 32px; height: 20px; background: #3c3c3c; clip-path: polygon(0 0, 100% 0, 50% 100%); }

/* main window */
.app {
  position: relative;
  display: flex;
  flex-direction: column;
  min-height: 100vh;
  overflow: hidden;
  background: #ebebeb;
}
.app-title {
  display: flex;
  align-items: center;
  gap: 34px;
  height: 114px;
  padding: 0 0 4px 25px;
  background: #fbf5ef;
  border-bottom: 3px solid #d6d3d0;
}
.app-title .light { width: 49px; height: 49px; }

.toolbar {
  display: flex;
  align-items: center;
  padding-left: 12px;
  background: linear-gradient(#f6f6f6, #eaeaea);
  border-bottom: 4px solid #ababab;
}
.toolbar svg { width: 100px; height: 100px; }
.toolbar-a { height: 156px; }
.toolbar-b { height: 162px; }
.toolbar-c { height: 157px; }
.tools { display: flex; gap: 36px; }
.grip {
  width: 18px;
  height: 66px;
  margin-right: 32px;
  background: radial-gradient(circle, #b4b4b4 2px, transparent 3px) 0 0 / 12px 12px;
}
.grip-mid { margin-left: 54px; }
.has-menu { position: relative; }
.has-menu .small { position: absolute; right: -8px; bottom: -2px; }
.split { margin: 8px 30px 0 24px; }
.toolbar-c svg { margin-top: 12px; }

.panel-title { height: 88px; padding: 20px 8px 0; font-size: 44px; line-height: 52px; }
.panel-title-layers { height: 94px; padding-top: 40px; }
.panel-tools {
  display: flex;
  align-items: center;
  gap: 44px;
  height: 129px;
  padding: 0 0 6px 28px;
  border-bottom: 2px solid #b4b4b4;
}
.panel-tools svg { width: 60px; height: 64px; }
.panel-tools-layers { height: 143px; padding-top: 12px; border-bottom: 3px solid #c4c4c4; }

.tree { height: 1056px; overflow: hidden; background: #fff; font-size: 53px; white-space: nowrap; }
.tree ul { display: grid; grid-template-rows: repeat(15, 1fr); height: 1116px; }
.tree li { display: flex; align-items: center; padding-left: 20px; }
.tree li i { width: 17px; margin-right: 37px; }
.tree li svg { width: 68px; height: 68px; margin-right: 24px; }
.tree .child { padding-left: 86px; }
.tree .tri-open { width: 32px; height: 16px; margin: 0 29px 0 -7px; background: #585858; clip-path: polygon(0 0, 100% 0, 50% 100%); }

.hscroll { display: flex; height: 40px; border-top: 2px solid #b9b9b9; background: #e2e2e2; }
.hscroll button { display: grid; place-items: center; width: 39px; background: linear-gradient(#fff, #ececec); border-right: 2px solid #b9b9b9; }
.hscroll button:last-child { border-right: 0; border-left: 2px solid #b9b9b9; }
.hscroll .tri-left, .hscroll .tri-right { width: 12px; height: 22px; }
.hscroll .thumb { flex: 856; background: linear-gradient(#fff, #ececec); border-right: 2px solid #b9b9b9; }
.hscroll .track { flex: 1297; }
.hscroll-browser { height: 59px; border-bottom: 2px solid #b9b9b9; }
.hscroll-browser button { width: 50px; }
.hscroll-browser .tri-left { width: 16px; height: 32px; }

.layers { display: flex; flex: 1; padding-right: 26px; background: #fff; }
.layer-list { flex: 1; }
.layer {
  display: flex;
  align-items: center;
  height: 76px;
  padding-left: 91px;
  background: linear-gradient(90deg, #0063e6 0, #0070ee 30%, #0068de 100%);
  color: #fff;
  font-size: 53px;
  font-weight: 700;
}
.layer span { text-decoration: underline; text-decoration-thickness: 4px; text-underline-offset: 7px; }
.tick { appearance: none; display: grid; place-items: center; width: 58px; height: 58px; background: #fff; border: 3px solid #b5b5b5; border-radius: 3px; }
.tick::before { content: ""; width: 34px; height: 40px; background: #1c1c1c; clip-path: polygon(0 48%, 16% 44%, 36% 72%, 82% 0, 100% 0, 48% 98%, 32% 98%); }
.swatch { width: 66px; height: 66px; margin: 0 24px 0 25px; background: #9b7db9; border: 3px solid #6f4f95; }
.splitter { width: 31px; padding: 10px 12px; background: #e8e8e8; border: solid #b9b9b9; border-width: 0 2px; }
.splitter i { width: 4px; height: 66px; background: radial-gradient(circle, #b0b0b0 2px, transparent 3px) 0 0 / 4px 12px; }

/* context menu, open over the window */
.menu {
  position: absolute;
  top: 276px;
  left: 518px;
  right: -40px;
  display: flex;
  flex-direction: column;
  background: #fff;
  border: solid #8b8b8b;
  border-width: 3px 0 0 3px;
  box-shadow: 0 24px 64px rgba(0, 0, 0, .42);
  font-size: 53px;
  line-height: 60px;
  white-space: nowrap;
}
.menu > button, .menu-check { display: flex; align-items: center; height: 99px; padding-left: 24px; text-align: left; }
.menu > button > span:first-child { margin-left: 87px; }
.menu svg { width: 68px; height: 68px; margin-right: 19px; }
.menu u { text-decoration-thickness: 2px; text-underline-offset: 9px; text-decoration-skip-ink: none; }
.menu button:disabled { color: #bdbdbd; }
.menu button:disabled svg { opacity: .35; }
.menu-check input { appearance: none; width: 58px; height: 58px; margin: 0 24px 0 5px; border: 3px solid #b9b9b9; border-radius: 3px; }
.menu hr { width: calc(100% - 16px); height: 9px; margin: 0 0 0 16px; border: 0; border-top: 3px solid #c6c6c6; }
.menu .current { background: #71a5f3; color: #fff; border: solid #6995dc; border-width: 3px 0; }

/* properties dialog */
.dialog { margin-top: 122px; background: #ebebeb; font-size: 36px; line-height: 45px; }
.dialog-title {
  position: relative;
  display: flex;
  align-items: center;
  gap: 22px;
  height: 71px;
  padding: 0 0 8px 19px;
  background: #fcf4ee;
  border-bottom: 2px solid #cfc9c6;
}
.dialog-title h1 { position: absolute; left: 0; right: 0; text-align: center; font-size: 37px; font-weight: 600; color: #4a4645; }
.dialog-body { display: flex; }
aside { display: flex; flex-direction: column; flex: none; width: 416px; background: #5b5b5b; }
.search { display: flex; align-items: center; flex: none; height: 66px; padding-left: 22px; background: #fff; border: 4px solid #6b9cc8; border-width: 4px 3px 3px 2px; }
.search svg { width: 34px; height: 36px; margin-right: 12px; }
.search input { flex: 1; min-width: 0; border: 0; outline: 0; background: none; }
.side { display: flex; flex: 1 1 0px; min-height: 0; margin-top: 17px; overflow: hidden; }
nav { display: flex; flex-direction: column; flex: 1; height: 1817px; color: #fff; font-size: 34px; }
nav button { display: flex; align-items: center; flex: 1 1 100px; padding: 0 0 0 8px; text-align: left; line-height: 42px; }
nav .two-line { flex-basis: 106px; }
nav svg { width: 74px; height: 74px; margin-right: 19px; }
nav .on { padding-left: 16px; background: #ebebeb; color: #232323; }
.vscroll { display: flex; flex-direction: column; width: 39px; background: #e2e2e2; border-left: 1px solid #b9b9b9; }
.vscroll button { display: grid; place-items: center; height: 37px; background: #fafafa; border-bottom: 2px solid #b9b9b9; }
.vscroll button:last-child { height: 31px; border-bottom: 0; border-top: 2px solid #b9b9b9; }
.vscroll .thumb { flex: 1340; background: linear-gradient(90deg, #fff, #ececec); border-bottom: 2px solid #b9b9b9; }
.vscroll .track { flex: 394; }

.pane { flex: 1; min-width: 0; padding-left: 16px; }
.pane h2 { position: relative; display: flex; align-items: center; gap: 23px; height: 75px; padding: 14px 0 0 2px; font-size: 37px; font-weight: 700; }
.pane h2.first { height: 65px; padding-top: 4px; }
.pane .dotted::before { content: ""; position: absolute; left: -11px; top: 24px; width: 4px; height: 48px; background: radial-gradient(circle, #b0b0b0 2px, transparent 3px) 0 0 / 4px 8px; }
.group { padding: 26px 31px 30px 26px; background: #e8e8e8; border: 3px solid #d6d6d6; border-radius: 5px; }
.row { display: flex; align-items: center; gap: 14px; }
.row-next { margin-top: 17px; }
.field { flex: 1; min-width: 0; height: 67px; padding: 0 6px; background: #fff; border: 3px solid #a6a6a6; border-radius: 6px; }

.select { position: relative; display: flex; }
.select select { appearance: none; flex: 1; min-width: 0; padding: 0 12px; border: 0; background: none; color: #000; opacity: 1; }
.select::after { content: ""; position: absolute; top: 50%; right: 17px; width: 24px; height: 12px; margin-top: -6px; background: #4e4e4e; clip-path: polygon(0 0, 100% 0, 50% 100%); }
.enc { width: 191px; height: 66px; background: linear-gradient(#fff, #ebebeb); border: 3px solid #bcbcbc; border-radius: 6px; }
.enc select { color: #969696; }
.enc::after { background: #b4b4b4; }

.group-crs { padding: 28px 31px 47px 26px; }
.crs-row { display: flex; align-items: flex-start; padding-left: 3px; }
.crs { flex: 1; height: 68px; background: linear-gradient(#fff, #ebebeb); border: 14px solid #0070c0; }
.crs select { height: 38px; padding: 0; }
.crs::after { right: 22px; }
.crs-pick { display: grid; place-items: center; width: 62px; height: 62px; background: linear-gradient(#fff, #ebebeb); border: 3px solid #a6a6a6; border-left: 0; border-radius: 0 6px 6px 0; }
.crs-pick svg { width: 46px; height: 46px; }
.warn { margin-top: 14px; font-size: 37px; font-weight: 700; white-space: nowrap; }
.note { margin-top: 32px; white-space: nowrap; }

.btn { display: flex; align-items: center; justify-content: center; width: 223px; height: 67px; background: linear-gradient(#fff, #ebebeb); border: 3px solid #a6a6a6; border-radius: 6px; color: #000; white-space: nowrap; }
.btn:disabled { border-color: #bcbcbc; color: #969696; }
.group-geom { display: flex; gap: 17px; padding: 27px 26px 46px; }
.w-index { width: 363px; }
.w-extent { width: 281px; }
.group-filter { display: flex; flex-direction: column; align-items: flex-end; gap: 18px; padding: 27px 31px 28px 26px; }
.query { align-self: stretch; border: 2px solid #bdbdbd; background: #fff; }
.query textarea { display: block; width: 100%; height: 631px; resize: none; border: 0; outline: 0; }
.w-query { width: 252px; }
footer { display: flex; gap: 17px; margin: 19px 0 0 -4px; }
.push { margin-left: auto; }
.btn-style { position: relative; padding-right: 32px; }
.btn-style i { position: absolute; right: 12px; width: 18px; height: 9px; }
.ok { border-color: #3398ee; background: linear-gradient(#fff, #dbe3ec); }
```
